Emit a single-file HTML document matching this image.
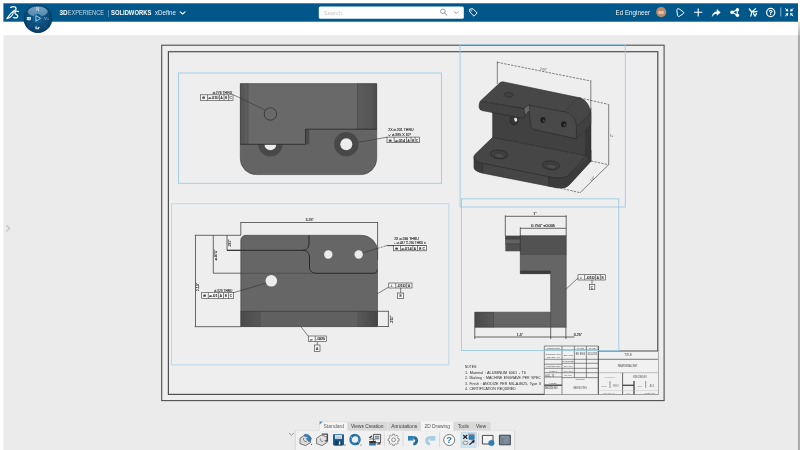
<!DOCTYPE html>
<html><head><meta charset="utf-8"><title>3DEXPERIENCE SOLIDWORKS xDefine</title>
<style>
html,body{margin:0;padding:0;width:800px;height:450px;overflow:hidden;background:#fff;font-family:"Liberation Sans",sans-serif;}
#app{position:absolute;left:0;top:0;width:800px;height:450px;background:#fff;overflow:hidden}
#canvas{position:absolute;left:4px;top:36px;width:793px;height:414px;background:#ebebeb}
#hdr{position:absolute;left:4px;top:4px;width:793px;height:17px;background:#01568a}
svg{position:absolute;left:0;top:0;filter:blur(0.45px)}
svg text{font-family:"Liberation Sans","DejaVu Sans",sans-serif}
#view1 text,#view3 text,#view4 text{fill:#262626;stroke:#262626;stroke-width:0.12px}
#notes text{fill:#2a2a2a}
</style></head><body>
<div id="app">
<div id="canvas"></div>
<div id="hdr"></div>
<svg id="main" width="800" height="450" viewBox="0 0 800 450">
<!--HEADER-ICONS-->
<defs><linearGradient id="gStrip" x1="0" x2="0" y1="0" y2="1"><stop offset="0" stop-color="#e6e6e6"/><stop offset="1" stop-color="#bdbdbd"/></linearGradient></defs>
<rect x="3.4" y="35.1" width="794.5" height="416" fill="#ebebeb"/>
<rect x="797.9" y="21.6" width="3" height="13.6" fill="url(#gStrip)"/>
<rect x="797.9" y="35.1" width="3" height="416" fill="#adadad"/>
<rect x="3.4" y="3.3" width="794.6" height="18.4" fill="#01568a"/>
<rect x="318.8" y="6.5" width="145" height="12.2" rx="1.5" fill="#ffffff"/>
<text x="323.8" y="14.6" font-size="5.6" fill="#c2c6ca" textLength="18.2" lengthAdjust="spacingAndGlyphs">Search</text>
<defs>
<radialGradient id="gComp" cx="0.5" cy="0.45" r="0.55"><stop offset="0" stop-color="#0e5a8c"/><stop offset="0.7" stop-color="#0a4b78"/><stop offset="1" stop-color="#063a5e"/></radialGradient>
<linearGradient id="gCompTop" x1="0" x2="0" y1="0" y2="1"><stop offset="0" stop-color="#7fa9c6"/><stop offset="1" stop-color="#5a8fb3"/></linearGradient>
</defs>
<g id="hdricons">
<!-- DS logo -->
<g fill="none" stroke="#fff" stroke-width="1.25" stroke-linecap="round" stroke-linejoin="round">
<path d="M10.6 7.5 C12 6.6 14 6.4 15.2 7 C16.6 7.8 16.2 9.4 15 10.2 C14.4 10.7 13.8 11 13 11.5"/>
<path d="M18.4 11.6 C17.4 10.8 15.6 10.9 15 11.9 C14.3 13.2 15.8 14.2 17 15 C18.2 15.9 17.8 17.3 16.4 17.8 C15.4 18.1 14.4 17.9 13.5 17.5"/>
</g>
<path d="M13.3 11.2 C11 13 8.6 16 6.7 18.7 C10.6 17.6 13.4 14.6 13.3 11.2 Z" fill="none" stroke="#fff" stroke-width="1.05" stroke-linejoin="round"/>
<!-- compass -->
<circle cx="37.9" cy="18.8" r="14.2" fill="url(#gComp)"/>
<circle cx="37.9" cy="18.8" r="13.8" fill="none" stroke="#073a5e" stroke-width="0.8" opacity="0.6"/>
<ellipse cx="37.7" cy="11.6" rx="10" ry="5.1" fill="url(#gCompTop)" opacity="0.9"/>
<path d="M31 25.5 L28.5 28 M44.6 25.5 L47.5 28.5" stroke="#2f78a6" stroke-width="0.6" fill="none" opacity="0.8"/>
<circle cx="37.6" cy="18.4" r="4.4" fill="#0d5a8e" stroke="#2a77a8" stroke-width="0.4"/>
<path d="M35.9 15.6 L40.6 18.4 L35.9 21.2 Z" fill="none" stroke="#cfe3f1" stroke-width="0.8" stroke-linejoin="round"/>
<text x="28.8" y="19.5" font-size="3.4" font-weight="bold" fill="#fff" stroke="#fff" stroke-width="0.25" text-anchor="middle">3D</text>
<text x="46.6" y="19.7" font-size="4.2" font-style="italic" fill="#a9c6da" text-anchor="middle">V+</text>
<text x="37.5" y="28.6" font-size="4.2" font-weight="bold" fill="#fff" stroke="#fff" stroke-width="0.25" text-anchor="middle">i.r</text>
<text x="37.6" y="11.2" font-size="4.6" fill="#e5eff6" text-anchor="middle">N</text>
<g id="hdrtext" fill="#fff" font-size="6.3">
<text x="59.4" y="14.7" font-weight="bold" textLength="8.2" lengthAdjust="spacingAndGlyphs">3D</text>
<text x="67.7" y="14.7" fill="#c9dbe8" textLength="36.3" lengthAdjust="spacingAndGlyphs">EXPERIENCE</text>
<text x="107.6" y="14.5" fill="#8fb3cc" font-size="7">|</text>
<text x="111" y="14.7" font-weight="bold" textLength="40.3" lengthAdjust="spacingAndGlyphs">SOLIDWORKS</text>
<text x="155" y="14.7" fill="#e8f0f6" textLength="21" lengthAdjust="spacingAndGlyphs">xDefine</text>
<text x="615.5" y="14.7" fill="#f0f5f9" font-size="6.5" textLength="34.5" lengthAdjust="spacingAndGlyphs">Ed Engineer</text>
</g>
<!-- chevron after xDefine -->
<path d="M180.2 11.9 L182.6 14 L185 11.9" fill="none" stroke="#fff" stroke-width="1.1" stroke-linecap="round" stroke-linejoin="round"/>
<!-- search icons -->
<circle cx="442.9" cy="11.3" r="2.3" fill="none" stroke="#6f7a84" stroke-width="0.7"/>
<path d="M444.6 13 L446.9 15.3" stroke="#6f7a84" stroke-width="0.9" stroke-linecap="round"/>
<path d="M454.2 11.5 L456.3 13.4 L458.4 11.5" fill="none" stroke="#7a858f" stroke-width="0.8"/>
<!-- tag icon -->
<path d="M469.8 9 L473 8.8 L477.2 13 L474 16.2 L469.8 12 Z" fill="none" stroke="#fff" stroke-width="0.95" stroke-linejoin="round"/>
<circle cx="471.7" cy="10.8" r="0.6" fill="#fff"/>
<!-- avatar -->
<circle cx="661.2" cy="12.1" r="5.1" fill="#b78b6b"/>
<text x="661.2" y="13.6" font-size="4.2" font-weight="bold" fill="#f3e6dc" text-anchor="middle">EE</text>
<!-- icons -->
<g fill="none" stroke="#fff" stroke-width="1" stroke-linecap="round" stroke-linejoin="round">
<path d="M676.8 10 C676.6 8.6 678.6 8.3 679.6 9.2 L683.6 12.2 C684.2 12.7 683.9 13.4 683.2 13.7 L679.3 16.3 C678.4 16.8 677.6 16.3 677.5 15.4 Z"/>
<path d="M698.2 8.7 V16 M694.5 12.3 H701.9" stroke-width="1.1"/>
<path d="M712.4 16 C712.6 13.4 714.4 11.8 717 11.8 V9.4 L720.3 12.4 L717 15.3 V13.4 C715 13.4 713.5 14.2 712.4 16 Z" fill="#fff" stroke-width="0.5"/>
<path d="M732.2 12.3 L737.2 9.8 M732.2 12.3 L737.2 15.2 M737.2 9.8 V15.2" stroke-width="1.05"/>
<path d="M749.3 9 L751.8 12 L750.8 16.2 M755.6 8.6 L751.8 12 M753 12.2 L757 11.4 M753.6 13.6 L755 16.2 L756.6 13.4" stroke-width="1.2"/>
<circle cx="770.7" cy="12.5" r="4.1" stroke-width="1.2"/>
</g>
<circle cx="732" cy="12.3" r="1.8" fill="#fff"/><circle cx="737.4" cy="9.7" r="1.7" fill="#fff"/><circle cx="737.4" cy="15.3" r="1.7" fill="#fff"/>
<text x="770.7" y="14.8" font-size="6.4" font-weight="bold" fill="#fff" stroke="#fff" stroke-width="0.2" text-anchor="middle">?</text>
<path d="M780.7 7.6 V16.6" stroke="#6a9dc0" stroke-width="1.3"/>
<g fill="#fff">
<path d="M788.3 11.5 L785.2 10.9 L787.7 8.4 Z M790.1 11.5 L793.2 10.9 L790.7 8.4 Z M788.3 13.1 L785.2 13.7 L787.7 16.2 Z M790.1 13.1 L793.2 13.7 L790.7 16.2 Z"/>
</g>
<g stroke="#fff" stroke-width="1" fill="none"><path d="M785.2 8.4 L787 10.2 M793.2 8.4 L791.4 10.2 M785.2 16.2 L787 14.4 M793.2 16.2 L791.4 14.4"/></g>
</g>
<!--SHEET-->
<g id="sheet" fill="none">
<rect x="161.7" y="45.2" width="502.4" height="355.4" fill="#eeeeee" stroke="#4e4e4e" stroke-width="1.1"/>
<rect x="168.4" y="51.7" width="489.4" height="342.7" stroke="#4e4e4e" stroke-width="1.2"/>
</g>
<path d="M6.3 225.2 L9.6 228.3 L6.3 231.4" fill="none" stroke="#c4c4c4" stroke-width="1.3"/>
<!--VIEW1-->
<defs>
<linearGradient id="gR1" x1="0" x2="1" y1="0" y2="0"><stop offset="0" stop-color="#5b5b5b"/><stop offset="0.7" stop-color="#555555"/><stop offset="1" stop-color="#4a4a4a"/></linearGradient>
<linearGradient id="gL1" x1="0" x2="1" y1="0" y2="0"><stop offset="0" stop-color="#525252"/><stop offset="1" stop-color="#606060"/></linearGradient>
<clipPath id="cpLow1"><rect x="240" y="144.3" width="140" height="40"/></clipPath>
</defs>
<g id="view1">
<path d="M240.3 83.7 H376.7 V158.6 A16 16 0 0 1 360.7 174.6 H256.3 A16 16 0 0 1 240.3 158.6 Z" fill="#646464"/>
<path d="M240.3 83.7 H376.7 V129.2 H305.5 V144.3 H240.3 Z" fill="#696969"/>
<rect x="240.3" y="83.7" width="7.6" height="60.6" fill="url(#gL1)"/>
<rect x="357.5" y="83.7" width="19.2" height="45.5" fill="url(#gR1)"/>
<rect x="305.5" y="129.2" width="3.3" height="15.1" fill="#4c4c4c"/>
<g clip-path="url(#cpLow1)">
<circle cx="270.4" cy="144.3" r="12.2" fill="#484848"/>
<circle cx="270.4" cy="144.3" r="5.9" fill="#ececec"/>
</g>
<circle cx="346.3" cy="144.2" r="12.2" fill="#484848"/>
<circle cx="346.3" cy="144.2" r="6" fill="#ececec"/>
<path d="M240.3 144.3 H305.5 V129.2 H376.7" fill="none" stroke="#2e2e2e" stroke-width="0.9"/>
<path d="M248 83.7 V144.3 M357.5 83.7 V129.2 M308.8 129.6 V144.3" fill="none" stroke="#3c3c3c" stroke-width="0.5"/>
<path d="M240.3 83.7 H376.7 V158.6 A16 16 0 0 1 360.7 174.6 H256.3 A16 16 0 0 1 240.3 158.6 Z" fill="none" stroke="#3a3a3a" stroke-width="0.6"/>
<circle cx="270.4" cy="114" r="6.2" fill="none" stroke="#2a2a2a" stroke-width="0.7"/>
<path d="M233 94.6 L265.4 110.2" stroke="#333" stroke-width="0.6" fill="none"/>
<path d="M358.3 142.3 L387 137.2" stroke="#333" stroke-width="0.6" fill="none"/>
<!-- left annotation -->
<text x="212.7" y="94" font-size="4.1" fill="#333" textLength="19.5" lengthAdjust="spacingAndGlyphs">⌀.276 THRU</text>
<g fill="#f4f4f4" stroke="#3a3a3a" stroke-width="0.6">
<rect x="200.3" y="94.8" width="32.7" height="5.6"/>
<path d="M207.5 94.8 V100.4 M219.5 94.8 V100.4 M224 94.8 V100.4 M228.5 94.8 V100.4" fill="none"/>
</g>
<text x="201.9" y="99.3" font-size="4" fill="#222">⊕</text>
<text x="208.5" y="99.2" font-size="3.2" fill="#333" textLength="10" lengthAdjust="spacingAndGlyphs">⌀.010</text>
<text x="220.5" y="99.2" font-size="3.2" fill="#333">A</text>
<text x="225" y="99.2" font-size="3.2" fill="#333">B</text>
<text x="229.5" y="99.2" font-size="3.2" fill="#333">C</text>
<!-- right annotation -->
<text x="388.2" y="131.4" font-size="4.1" fill="#333" textLength="25.4" lengthAdjust="spacingAndGlyphs">2X ⌀.201 THRU</text>
<text x="388.2" y="136.1" font-size="4.1" fill="#333" textLength="23" lengthAdjust="spacingAndGlyphs">⌵ ⌀.385 X 82°</text>
<g fill="#f4f4f4" stroke="#3a3a3a" stroke-width="0.6">
<rect x="387" y="137.1" width="32.4" height="5.6"/>
<path d="M394.2 137.1 V142.7 M406.5 137.1 V142.7 M411 137.1 V142.7 M415.2 137.1 V142.7" fill="none"/>
</g>
<text x="388.6" y="141.7" font-size="4" fill="#222">⊕</text>
<text x="395.2" y="141.5" font-size="3.2" fill="#333" textLength="10" lengthAdjust="spacingAndGlyphs">⌀.014</text>
<text x="407.5" y="141.5" font-size="3.2" fill="#333">A</text>
<text x="412" y="141.5" font-size="3.2" fill="#333">B</text>
<text x="416" y="141.5" font-size="3.2" fill="#333">C</text>
</g>
<!--VIEW2-->
<g id="view2" stroke-linejoin="round">
<!-- dimension lines -->
<g stroke="#333" stroke-width="0.6" fill="none">
<path d="M497.3 84 V61.5 M590.8 108 V80.4"/>
<path d="M497.3 62.3 L590.8 81" stroke-dasharray="2.4 1.1"/>
<path d="M583.5 98.7 L608.7 104.4" stroke-dasharray="2.4 1.1"/>
<path d="M608.7 104.4 V164.7"/>
<path d="M591 161 L608.7 164.7" stroke-dasharray="2.4 1.1"/>
<path d="M608.7 164.7 L580 192.7"/>
<path d="M556.7 187.3 L580 192.7" stroke-dasharray="2.4 1.1"/>
</g>
<text x="543.3" y="70.2" font-size="3.2" fill="#444" text-anchor="middle" transform="rotate(9.5 543.3 70.2)">3.25"</text>
<text transform="translate(612.6 135.6) rotate(-90)" font-size="3.2" fill="#444" text-anchor="middle">2"</text>
<text transform="translate(593.2 179.3) rotate(-45)" font-size="3.2" fill="#444" text-anchor="middle">1.5"</text>

<!-- base plate: side (front/left/right) -->
<path d="M474 156.6 V167.2 C474 169.9 477 171.5 482 173 L556.7 187.8 C562 188.6 566 187.9 568.9 185.2 L591 161.2 V150 L568 172 L483 162 Z" fill="#454545" stroke="#262626" stroke-width="0.6"/>
<path d="M474 156.6 V167.2 C474 169.9 477 171.5 482.7 173.1 V163.4 Z" fill="#3c3c3c"/>
<path d="M548.7 176.6 V186.3 L556.7 187.8 C562 188.6 566 187.9 568.9 185.2 L591 161.2 V155 L568 176 Z" fill="#3b3b3b"/>
<!-- base top face -->
<path d="M492.7 137.3 L474.9 154.6 C473.3 156.6 473.6 159.2 476.5 161 C478.6 162.2 480.5 162.8 482.7 163.3 L548.7 176.6 C556 178.2 563.5 178.8 568.7 175.3 L586 156.3 L585.4 155.4 Z" fill="#464646" stroke="#262626" stroke-width="0.6"/>
<path d="M482.7 163.3 V173.1 M548.7 176.6 V186.3" stroke="#2c2c2c" stroke-width="0.5" fill="none"/>
<!-- wall right side -->
<path d="M585.5 128 V155.4 L591 161.2 V108 Z" fill="#373737" stroke="#262626" stroke-width="0.5"/>
<!-- wall front face -->
<path d="M492.7 112 V137.3 L585.5 155.4 V129 L575 138 L535 128 L530 104 Z" fill="#414141" stroke="#262626" stroke-width="0.6"/>
<!-- hole in wall under lip -->
<ellipse cx="514" cy="120.4" rx="4" ry="4.3" fill="#373737" stroke="#1f1f1f" stroke-width="0.6"/>
<ellipse cx="515.7" cy="119.6" rx="1.5" ry="2.1" fill="#e8e8e8" transform="rotate(-20 515.7 119.6)"/>
<!-- curved right surface of block -->
<path d="M576.7 98.7 L580.7 98 C586 100.5 589.6 105 590.8 113.3 V124 L585.5 130 L576.3 138.8 V126.5 C576 119 571.5 113.6 564 111.6 Z" fill="#464646" stroke="#262626" stroke-width="0.6"/>
<path d="M576.5 126.6 L590.8 113.3 V124 L585.5 130 L576.3 138.8 Z" fill="#414141"/>
<path d="M576.5 126.6 L590.8 113.3" stroke="#2a2a2a" stroke-width="0.5" fill="none"/>
<!-- block front face -->
<path d="M528.7 105 L564 111.6 C571.5 113.6 576 119 576.5 126.6 L576.3 138.8 L536 130 C533 129.3 531.2 128 530.7 125.5 L529 110.5 Z" fill="#494949" stroke="#262626" stroke-width="0.6"/>
<ellipse cx="543" cy="120" rx="2.7" ry="3" fill="#1e1e1e"/>
<ellipse cx="563.7" cy="124.3" rx="2.7" ry="3" fill="#1e1e1e"/>
<ellipse cx="543.9" cy="120.7" rx="1" ry="1.2" fill="#474747"/>
<ellipse cx="564.6" cy="125" rx="1" ry="1.2" fill="#474747"/>
<!-- top face -->
<path d="M503.5 81.9 L580.7 98 L576.7 98.7 L564 111.6 L528.7 105 L524 108.7 L483 101.6 C481 101.4 480.2 101.6 479.6 102.6 L480.2 101.2 L498.7 84 C500 82.6 501.5 81.6 503.5 81.9 Z" fill="#474747" stroke="#262626" stroke-width="0.6"/>
<ellipse cx="508.7" cy="94.7" rx="4.3" ry="2.4" fill="#404040" stroke="#2a2a2a" stroke-width="0.5" transform="rotate(8 508.7 94.7)"/>
<!-- lip front face -->
<path d="M483 101.6 L524 108.7 L525.3 114.6 C525.5 117.3 523.8 118.3 521.3 118 L482.2 110.6 C480 110 479 108.3 479.1 105.8 C479.2 103.3 480 101.3 483 101.6 Z" fill="#434343" stroke="#262626" stroke-width="0.6"/>
<!-- notch face -->
<path d="M524 108.7 L528.9 104.8 L529.6 110.3 L525.2 115 Z" fill="#686868" stroke="#2c2c2c" stroke-width="0.4"/>
<!-- countersinks on base -->
<g fill="#3f3f3f" stroke="#242424" stroke-width="0.6">
<ellipse cx="499" cy="154.4" rx="8.7" ry="4.3" transform="rotate(6 499 154.4)"/>
<ellipse cx="551" cy="165.3" rx="8.7" ry="4.4" transform="rotate(6 551 165.3)"/>
</g>
<g fill="#4d4d4d" stroke="#2c2c2c" stroke-width="0.5">
<ellipse cx="499.3" cy="155.6" rx="5" ry="2.3" transform="rotate(6 499.3 155.6)"/>
<ellipse cx="551.3" cy="166.5" rx="5" ry="2.3" transform="rotate(6 551.3 166.5)"/>
</g>
</g>
<!--VIEW3-->
<defs>
<linearGradient id="gR3" x1="0" x2="1" y1="0" y2="0"><stop offset="0" stop-color="#5a5a5a"/><stop offset="1" stop-color="#444444"/></linearGradient>
<linearGradient id="gL3" x1="0" x2="1" y1="0" y2="0"><stop offset="0" stop-color="#4a4a4a"/><stop offset="1" stop-color="#575757"/></linearGradient>
</defs>
<g id="view3">
<!-- dimension lines -->
<g stroke="#3a3a3a" stroke-width="0.75" fill="none">
<path d="M240.8 235 V222 M377.6 260 V222 M240.8 222.5 H377.6"/>
<path d="M194.7 235.3 H241 M195.5 235.3 V326.7 M194.7 326.7 H241"/>
<path d="M213.3 235.3 V273.2 M213.3 273.2 H241"/>
<path d="M227 235.3 V250.3 M227 250.3 H241"/>
<path d="M377.5 311.3 H389 M377.5 326.5 H389 M388.4 311.3 V326.5"/>
</g>
<path d="M240.8 326.6 V240.3 A5 5 0 0 1 245.8 235.3 H361.5 A16 16 0 0 1 377.5 251.3 V326.6 Z" fill="#666666"/>
<rect x="240.8" y="311.3" width="136.7" height="15.3" fill="#606060"/>
<rect x="240.8" y="311.3" width="19.2" height="15.3" fill="url(#gL3)"/>
<rect x="358" y="311.3" width="19.5" height="15.3" fill="url(#gR3)"/>
<path d="M240.8 311.3 H377.5" stroke="#3d3d3d" stroke-width="0.8" fill="none"/>
<path d="M260 311.3 V326.6 M358 311.3 V326.6" stroke="#444" stroke-width="0.5" fill="none"/>
<path d="M240.8 273.3 H316" stroke="#4a4a4a" stroke-width="0.7" fill="none"/>
<path d="M227 250.3 H302.5 C307 250.3 309 247.5 309 243.5 V235.3 M302.5 250.3 C307 250.3 309.5 253 309.5 257.5 V266.8 C309.5 271 312 273.3 316.5 273.3 H373.5 C376 273.3 377.5 272 377.5 269.5" stroke="#242424" stroke-width="0.95" fill="none"/>
<path d="M240.8 326.6 V240.3 A5 5 0 0 1 245.8 235.3 H361.5 A16 16 0 0 1 377.5 251.3 V326.6 Z" fill="none" stroke="#3a3a3a" stroke-width="0.6"/>
<circle cx="271.3" cy="280.8" r="5.8" fill="#ececec"/>
<circle cx="328.3" cy="254.5" r="4.2" fill="#ececec"/>
<circle cx="358.7" cy="254.5" r="4.2" fill="#ececec"/>
<!-- leaders -->
<g stroke="#333" stroke-width="0.6" fill="none">
<path d="M233.7 292.6 L266 283.2"/>
<path d="M362.6 253 L377.5 248.4"/><path d="M377.5 248.4 L386.4 245.7" stroke-dasharray="2.2 1"/>
<path d="M386.4 245.6 H426.4" stroke-width="0.9"/>
<path d="M377.5 293.7 L388.8 287"/>
<path d="M300.7 326.4 L308.7 336.7"/>
<path d="M400.6 288 V293 M317.3 341.6 V345"/>
</g>
<!-- dim texts -->
<text x="309.7" y="221.2" font-size="3.6" fill="#333" text-anchor="middle">3.25"</text>
<text transform="translate(199.2 287) rotate(-90)" font-size="3.6" fill="#333" text-anchor="middle">2.13"</text>
<text transform="translate(217.3 255) rotate(-90)" font-size="3.6" fill="#333" text-anchor="middle">⌀.875"</text>
<text transform="translate(231 243.3) rotate(-90)" font-size="3.4" fill="#333" text-anchor="middle">.375"</text>
<text transform="translate(392.6 319.5) rotate(-90)" font-size="3.4" fill="#333" text-anchor="middle">.375"</text>
<!-- left annotation -->
<text x="214.2" y="291.5" font-size="4.1" fill="#333" textLength="18.3" lengthAdjust="spacingAndGlyphs">⌀.323 THRU</text>
<g fill="#f4f4f4" stroke="#3a3a3a" stroke-width="0.6">
<rect x="201.7" y="292.6" width="32" height="5.7"/>
<path d="M208.3 292.6 V298.3 M218.6 292.6 V298.3 M223.5 292.6 V298.3 M228.5 292.6 V298.3" fill="none"/>
</g>
<text x="203" y="297.3" font-size="4" fill="#222">⊕</text>
<text x="209.3" y="297" font-size="3.2" fill="#333" textLength="8.5" lengthAdjust="spacingAndGlyphs">⌀.01</text>
<text x="219.8" y="297" font-size="3.2" fill="#333">A</text>
<text x="224.8" y="297" font-size="3.2" fill="#333">B</text>
<text x="229.8" y="297" font-size="3.2" fill="#333">C</text>
<!-- top-right annotation -->
<text x="394.2" y="239.7" font-size="4" fill="#333" textLength="24.6" lengthAdjust="spacingAndGlyphs">2X ⌀.266 THRU</text>
<text x="394.2" y="244.4" font-size="4" fill="#333" textLength="31.6" lengthAdjust="spacingAndGlyphs">⌴ ⌀.437 ↧.250 THRU ●</text>
<g fill="#f4f4f4" stroke="#3a3a3a" stroke-width="0.6">
<rect x="393.5" y="245.6" width="32.9" height="5.2"/>
<path d="M400.5 245.6 V250.8 M412.8 245.6 V250.8 M417.5 245.6 V250.8" fill="none"/>
</g>
<text x="395" y="250" font-size="4" fill="#222">⊕</text>
<text x="401.6" y="249.6" font-size="3.2" fill="#333" textLength="10" lengthAdjust="spacingAndGlyphs">⌀.014</text>
<text x="413.8" y="249.6" font-size="3.2" fill="#333">A</text>
<text x="419" y="249.6" font-size="3.2" fill="#333" textLength="6" lengthAdjust="spacingAndGlyphs">B C</text>
<!-- right annotation -->
<g fill="#f4f4f4" stroke="#3a3a3a" stroke-width="0.6">
<rect x="388.8" y="283" width="23.2" height="5"/>
<path d="M395.7 283 V288 M406.7 283 V288" fill="none"/>
<rect x="397.5" y="293" width="6.2" height="5.3"/>
</g>
<text x="390.3" y="287" font-size="3.4" fill="#222">⊥</text>
<text x="396.7" y="287" font-size="3.2" fill="#333" textLength="9" lengthAdjust="spacingAndGlyphs">.010</text>
<text x="408" y="287" font-size="3.2" fill="#333">A</text>
<text x="399.5" y="297.1" font-size="3.2" fill="#333">B</text>
<!-- bottom annotation -->
<g fill="#f4f4f4" stroke="#3a3a3a" stroke-width="0.6">
<rect x="308.4" y="336" width="18.3" height="5.6"/>
<path d="M315.3 336 V341.6" fill="none"/>
<rect x="314.4" y="345" width="5.6" height="6.3"/>
</g>
<text x="309.7" y="340.6" font-size="3.6" fill="#222">▱</text>
<text x="316.2" y="340.4" font-size="3.2" fill="#333" textLength="9" lengthAdjust="spacingAndGlyphs">.005</text>
<text x="316" y="349.6" font-size="3.4" fill="#333">A</text>
</g>
<!--VIEW4-->
<defs>
<linearGradient id="gL4" x1="0" x2="1" y1="0" y2="0"><stop offset="0" stop-color="#484848"/><stop offset="1" stop-color="#5a5a5a"/></linearGradient>
</defs>
<g id="view4">
<g stroke="#3a3a3a" stroke-width="0.75" fill="none">
<path d="M505.3 236 V215.3 M566.2 236 V215.3 M505.3 216.3 H566.2"/>
<path d="M520.3 236 V227.3 M520.3 228.3 H566.2"/>
<path d="M474.8 327 V339 M550.7 327 V339 M565.9 327 V339 M474.8 337 H574.5"/>
</g>
<!-- small left block -->
<rect x="505.3" y="235.8" width="15.2" height="15.5" fill="#505050"/>
<rect x="505.3" y="235.8" width="15.2" height="3.8" fill="#464646"/>
<rect x="505.3" y="239.6" width="15.2" height="4" fill="#626262"/>
<path d="M505.3 244 H520.3" stroke="#3a3a3a" stroke-width="0.6"/>
<!-- main body -->
<path d="M520.3 235.8 H566.2 V327.2 H474.8 V312.2 H550.7 V273.7 H520.3 Z" fill="#656565"/>
<rect x="520.3" y="235.8" width="45.9" height="19.2" fill="#525252"/>
<rect x="520.3" y="270.6" width="30.4" height="3.1" fill="#3c3c3c"/>
<rect x="474.8" y="312.2" width="18.7" height="15" fill="url(#gL4)"/>
<path d="M493.5 312.2 V327.2 M550.7 312.2 V327.2" stroke="#3c3c3c" stroke-width="0.5" fill="none"/>
<path d="M520.3 235.8 H566.2 V327.2 H474.8 V312.2 H550.7 V273.7 H520.3 Z" fill="none" stroke="#3a3a3a" stroke-width="0.6"/>
<path d="M520.3 235.8 V251.3" stroke="#333" stroke-width="0.6"/>
<!-- texts -->
<text x="535" y="214.6" font-size="3.6" fill="#333" text-anchor="middle">1"</text>
<text x="531.3" y="227.2" font-size="3.4" fill="#333" textLength="23.7" lengthAdjust="spacingAndGlyphs">0.750" ±0.005</text>
<text x="520" y="336.3" font-size="3.6" fill="#333" text-anchor="middle">1.5"</text>
<text x="578" y="336.3" font-size="3.6" fill="#333" text-anchor="middle">0.25"</text>
<!-- annotation -->
<path d="M565.9 289.3 L578 278 M592 280 V284.4" stroke="#333" stroke-width="0.6" fill="none"/>
<g fill="#f4f4f4" stroke="#3a3a3a" stroke-width="0.6">
<rect x="578" y="274.7" width="27.3" height="5.3"/>
<path d="M584.6 274.7 V280 M595.6 274.7 V280 M600.4 274.7 V280" fill="none"/>
<rect x="589.3" y="284.4" width="5.5" height="5.3"/>
</g>
<text x="579.6" y="279" font-size="3.4" fill="#222">⊥</text>
<text x="585.7" y="278.9" font-size="3.2" fill="#333" textLength="9" lengthAdjust="spacingAndGlyphs">.010</text>
<text x="596.8" y="278.9" font-size="3.2" fill="#333">A</text>
<text x="601.6" y="278.9" font-size="3.2" fill="#333">B</text>
<text x="590.8" y="288.6" font-size="3.2" fill="#333">C</text>
</g>
<!--TITLEBLOCK-->
<g id="notes" font-size="4.1" fill="#3a3a3a" word-spacing="0.6">
<text x="465" y="367.7" textLength="12" lengthAdjust="spacingAndGlyphs">NOTES:</text>
<text x="465" y="373.7" textLength="60.8" lengthAdjust="spacingAndGlyphs">1. Material : ALUMINUM 6061 - T6</text>
<text x="465" y="379.3" textLength="75.8" lengthAdjust="spacingAndGlyphs">2. Marking : MACHINE ENGRAVE PER SPEC</text>
<text x="465" y="384.6" textLength="75.8" lengthAdjust="spacingAndGlyphs">3. Finish : ANODIZE PER MIL-A-8625, Type II</text>
<text x="465" y="390" textLength="50.7" lengthAdjust="spacingAndGlyphs">4. CERTIFICATION REQUIRED</text>
</g>
<g id="titleblock">
<path d="M544.3 346 H598.3 V351 H658 V394.4 H544.3 Z" fill="#f1f1f1"/>
<g fill="none" stroke="#444" stroke-width="0.6">
<path d="M544.3 346 H598.3 M544.3 346 V394.4 M562 346 V394.4 M574.4 346 V377.6 M586.4 346 V377.6"/>
<path d="M598.3 346 V394.4" stroke-width="1"/>
<path d="M544.3 350 H598.3 M544.3 359.3 H598.3 M562 363.3 H598.3 M544.3 368.3 H598.3 M544.3 372.7 H598.3 M562 377.6 H598.3 M544.3 377 H562" stroke-width="0.6"/>
<path d="M544.3 364.2 H562" stroke-width="0.6"/>
<path d="M544.3 385.2 H562" stroke-width="1.4"/>
<path d="M598.3 351 H658" stroke-width="1.1" stroke="#4a4a4a"/>
<path d="M598.3 359.3 H658" stroke-width="0.7"/>
<path d="M598.3 372.7 H658" stroke-width="0.5" stroke="#8a8a8a"/>
<path d="M622.6 372.7 V394.4" stroke-width="0.8"/>
<path d="M634 381 V394.4" stroke-width="1.3"/>
<path d="M622.6 385.3 H634" stroke-width="1.3"/>
<path d="M610 381 V388 M645.7 381 V388" stroke-width="0.6" stroke="#555"/>
<path d="M598.3 390.5 H658" stroke-width="0.4" stroke="#bdbdbd"/>
</g>
<g fill="#444" font-size="2.4">
<text x="553.2" y="348.7" text-anchor="middle" textLength="13" lengthAdjust="spacingAndGlyphs">UNLESS OTHERWISE</text>
<text x="580.4" y="348.9" text-anchor="middle">NAME</text>
<text x="592.4" y="348.9" text-anchor="middle">DATE</text>
<text x="553.2" y="354.6" text-anchor="middle" textLength="15" lengthAdjust="spacingAndGlyphs">DIMENSIONS ARE IN</text>
<text x="553.2" y="358" text-anchor="middle" textLength="13" lengthAdjust="spacingAndGlyphs">INCHES ±.01</text>
<text x="568.2" y="355.6" text-anchor="middle">DRAWN</text>
<text x="580.4" y="354.9" text-anchor="middle" font-size="3" textLength="9.5" lengthAdjust="spacingAndGlyphs">ED ENG</text>
<text x="592.4" y="354.9" text-anchor="middle" font-size="3" textLength="9.5" lengthAdjust="spacingAndGlyphs">01/02/20</text>
<text x="568.2" y="362.2" text-anchor="middle">CHECKED</text>
<text x="553.2" y="367.2" text-anchor="middle" textLength="14" lengthAdjust="spacingAndGlyphs">INTERPRET GEOM</text>
<text x="568.2" y="367" text-anchor="middle" textLength="9" lengthAdjust="spacingAndGlyphs">ENG APPR</text>
<text x="553.2" y="371.5" text-anchor="middle" textLength="8" lengthAdjust="spacingAndGlyphs">MATERIAL</text>
<text x="568.2" y="371.5" text-anchor="middle" textLength="9" lengthAdjust="spacingAndGlyphs">MFG APPR</text>
<text x="545.3" y="376.6" font-size="3" textLength="9" lengthAdjust="spacingAndGlyphs">6061 - T6</text>
<text x="568.2" y="376.3" text-anchor="middle" textLength="8" lengthAdjust="spacingAndGlyphs">QUALITY</text>
<text x="580" y="380.3" text-anchor="middle" textLength="9" lengthAdjust="spacingAndGlyphs">COMMENTS</text>
<text x="553.2" y="383.5" text-anchor="middle">FINISH</text>
<text x="545.3" y="389.3" font-size="3.1" fill="#222" textLength="12.5" lengthAdjust="spacingAndGlyphs">ANODIZE, BLK</text>
<text x="580" y="388.7" text-anchor="middle" font-size="3.3" textLength="13.5" lengthAdjust="spacingAndGlyphs">SEE NOTES</text>
<text x="628" y="356.2" text-anchor="middle" font-size="2.8">TITLE</text>
<text x="627.7" y="367.2" text-anchor="middle" font-size="3.4" textLength="20" lengthAdjust="spacingAndGlyphs">REAR BRACKET</text>
<text x="610" y="378" text-anchor="middle" fill="#999">PROJECT</text>
<text x="640" y="378" text-anchor="middle" font-size="3.2" textLength="14" lengthAdjust="spacingAndGlyphs">SIZE  DWG NO</text>
<text x="604" y="387" text-anchor="middle" fill="#888">SIZE</text>
<text x="616" y="387" text-anchor="middle" fill="#777" font-size="2.8">REV</text>
<text x="640" y="387" text-anchor="middle" fill="#888">REV</text>
<text x="652" y="387" text-anchor="middle" fill="#777" font-size="2.8">A01</text>
<text x="609" y="393.5" text-anchor="middle" fill="#888">SCALE 1:1</text>
<text x="628" y="393.5" text-anchor="middle" fill="#888">WT</text>
<text x="650" y="393.5" text-anchor="middle" fill="#666" textLength="11" lengthAdjust="spacingAndGlyphs">SHEET 1 OF 1</text>
</g>
</g>
<g id="viewboxes" fill="none" stroke="#9ccbe0" stroke-width="0.9">
<rect x="178.5" y="73" width="263" height="110.3"/>
<rect x="460.1" y="44.7" width="165.2" height="162.3"/>
<rect x="171.5" y="203.8" width="277.4" height="161.1" stroke="#b5d8e8"/>
<rect x="461.5" y="198.8" width="157.3" height="151.7"/>
</g>
<!--TOOLBAR-->
<g id="toolbar">
<rect x="295.3" y="430.6" width="219.4" height="20" fill="#f1f1f1"/>
<path d="M295.3 430.6 V450 M514.7 430.6 V450" stroke="#d2d2d2" stroke-width="0.8" fill="none"/>
<path d="M295.3 430.6 H514.7" stroke="#dcdcdc" stroke-width="0.6" fill="none"/>
<!-- tabs -->
<rect x="319.5" y="421.6" width="27.6" height="9.2" fill="#f4f4f4"/>
<path d="M319.5 430.8 V421.6 H347.1" fill="none" stroke="#d6d6d6" stroke-width="0.5"/>
<path d="M319.6 421.6 H322.6 L319.6 424.8 Z" fill="#3d8fc9"/>
<rect x="347.3" y="421.8" width="40" height="8.6" fill="#d9d9d9"/>
<rect x="387.9" y="421.8" width="32.8" height="8.6" fill="#d9d9d9"/>
<rect x="421" y="421.6" width="32.2" height="9.2" fill="#f4f4f4"/>
<rect x="453.4" y="421.8" width="37.2" height="8.6" fill="#d9d9d9"/>
<g font-size="5.6" fill="#3c3c3c">
<text x="323.5" y="428" textLength="20.5" lengthAdjust="spacingAndGlyphs" fill="#666">Standard</text>
<text x="351" y="428" textLength="32.5" lengthAdjust="spacingAndGlyphs">Views Creation</text>
<text x="391.3" y="428" textLength="26" lengthAdjust="spacingAndGlyphs">Annotations</text>
<text x="424.5" y="428" textLength="25.5" lengthAdjust="spacingAndGlyphs" fill="#555">2D Drawing</text>
<text x="458" y="428" textLength="10.8" lengthAdjust="spacingAndGlyphs">Tools</text>
<text x="476" y="428" textLength="10" lengthAdjust="spacingAndGlyphs">View</text>
</g>
<path d="M289 433 L291.5 435.3 L294 433" fill="none" stroke="#777" stroke-width="0.7"/>
<!-- separators -->
<path d="M384.3 432.6 V446.4 M403 432.6 V446.4 M439.6 432.6 V446.4 M478.6 432.6 V446.4" stroke="#cfcfcf" stroke-width="0.7"/>
<!-- icon 1: part with blue arrow -->
<g stroke-linejoin="round">
<path d="M300 438.2 L305 435 L310.6 437 V442.4 L305.6 445.6 L300 443.6 Z" fill="#dcdcdc" stroke="#555" stroke-width="0.8"/>
<path d="M303.6 438 C303 440.2 304.4 441.8 306.6 441.6" fill="none" stroke="#555" stroke-width="0.7"/>
<path d="M304.6 434.4 C308 433.6 310.2 435.6 310.2 438.4 L311.8 438.4 L309 442 L306 438.4 L307.8 438.4 C307.8 437 306.6 436.2 304.6 436.6 Z" fill="#2f7fb8" stroke="#1f5f90" stroke-width="0.4"/>
<path d="M310.6 445 l1.4 0 l0 -1.4 z" fill="#444"/>
<!-- icon 2 -->
<path d="M316.6 438.2 L321.4 435 L327 437 V442.4 L322 445.6 L316.6 443.6 Z" fill="#e2e2e2" stroke="#5a5a5a" stroke-width="0.8"/>
<path d="M321.8 434.2 H327.4 V440.8 H324.6" fill="none" stroke="#4a4a4a" stroke-width="1.3"/>
<path d="M320.4 438.4 C320 440.4 321.2 441.8 323 441.6" fill="none" stroke="#5a5a5a" stroke-width="0.7"/>
<!-- icon 3: save -->
<rect x="333" y="434.2" width="11" height="11.2" rx="0.8" fill="#1d5f92"/>
<rect x="335" y="435" width="7" height="3.8" fill="#dfe9f1"/>
<path d="M335.6 436.2 H341.4 M335.6 437.5 H341.4" stroke="#7fa6c4" stroke-width="0.4"/>
<rect x="334.8" y="440.6" width="7.4" height="4.8" fill="#123f63"/>
<rect x="338.8" y="441.4" width="1.6" height="3.2" fill="#cfe0ee"/>
<path d="M344 445.4 l1.4 0 l0 -1.4 z" fill="#444"/>
<!-- icon 4: refresh -->
<circle cx="355" cy="439.6" r="4.5" fill="#e9eef2" stroke="#2a78b0" stroke-width="2.5"/>
<path d="M351 436.4 L354.4 436.2 L352.4 439 Z M359 442.8 L355.6 443 L357.6 440.2 Z" fill="#e9eef2"/>
<path d="M350.6 435 L354.8 434.6 L352.6 438 Z" fill="#1f5f90"/>
<path d="M359.4 444.2 L355.2 444.6 L357.4 441.2 Z" fill="#1f5f90"/>
<path d="M360 445.6 l1.4 0 l0 -1.4 z" fill="#444"/>
<!-- icon 5 -->
<rect x="373.4" y="434.4" width="7.2" height="8.4" fill="#f2f2f2" stroke="#444" stroke-width="0.9"/>
<rect x="374.8" y="435.8" width="4.4" height="3.6" fill="#7b8894"/>
<path d="M374.8 437.4 H379.2" stroke="#dfe4e8" stroke-width="0.5"/>
<path d="M368.8 437.6 L371.6 435.2 L372.2 436.4 L370.2 438.6 Z" fill="#3a3a3a"/>
<path d="M369.4 439.6 C371 438.4 373.4 438.8 375.4 440.2" fill="none" stroke="#555" stroke-width="0.8"/>
<rect x="369.2" y="441" width="6.6" height="2" fill="#333"/>
<rect x="369.2" y="443" width="6.6" height="2.5" fill="#2b77ad"/>
<path d="M376.6 444.6 L380.4 441.4 L380.4 444.6 Z" fill="#4a4a4a"/>
<!-- icon 6: gear -->
<path d="M397.96 438.68 L399.23 438.91 L399.23 440.69 L397.96 440.92 L397.47 442.09 L398.21 443.15 L396.95 444.41 L395.89 443.67 L394.72 444.16 L394.49 445.43 L392.71 445.43 L392.48 444.16 L391.31 443.67 L390.25 444.41 L388.99 443.15 L389.73 442.09 L389.24 440.92 L387.97 440.69 L387.97 438.91 L389.24 438.68 L389.73 437.51 L388.99 436.45 L390.25 435.19 L391.31 435.93 L392.48 435.44 L392.71 434.17 L394.49 434.17 L394.72 435.44 L395.89 435.93 L396.95 435.19 L398.21 436.45 L397.47 437.51 Z" fill="#f3f3f3" stroke="#666" stroke-width="0.65" stroke-linejoin="round"/>
<circle cx="393.6" cy="439.8" r="1.9" fill="#f3f3f3" stroke="#666" stroke-width="0.65"/>
<!-- icon 7: undo -->
<path d="M413.6 437.5 A3.15 3.15 0 0 1 413.3 443.9" fill="none" stroke="#2a6a96" stroke-width="2.9"/>
<rect x="408" y="436" width="5.6" height="4.6" fill="#3b8fc6"/>
<path d="M408 436 H413.6 V437.6 L408 440.6 Z" fill="#2f7db4"/>
<!-- icon 8: redo -->
<path d="M429.8 437.5 A3.15 3.15 0 0 0 430.1 443.9" fill="none" stroke="#a6c9dc" stroke-width="2.9"/>
<rect x="429.8" y="436" width="5.6" height="4.6" fill="#a9cfe3"/>
<!-- icon 9: help -->
<circle cx="449.2" cy="440" r="5.5" fill="#fbfbfb" stroke="#5a5a5a" stroke-width="0.8"/>
<text x="449.2" y="443.4" font-size="9.4" font-weight="bold" fill="#2a78b0" text-anchor="middle">?</text>
<!-- icon 10: active -->
<rect x="461" y="432.4" width="15.2" height="14.8" fill="#d6e7f3" stroke="#a9cde6" stroke-width="0.6"/>
<path d="M463.2 435 L467.2 438.8 M467.2 435 L463.2 438.8" stroke="#2a2a2a" stroke-width="1.3" fill="none"/>
<path d="M468 434.2 H474.6" stroke="#444" stroke-width="0.7"/>
<rect x="469" y="435.4" width="5.2" height="4" fill="#2f7fb8" stroke="#1f5f90" stroke-width="0.6"/>
<ellipse cx="465.4" cy="442.8" rx="2.6" ry="1.7" fill="#e6e6e6" stroke="#555" stroke-width="0.6"/>
<path d="M469.4 444.8 L473.8 441" stroke="#2a2a2a" stroke-width="1.2"/>
<path d="M474.8 440 L471.2 440.8 L474 443.6 Z" fill="#2a2a2a"/>
<!-- icon 11 -->
<rect x="482.4" y="435.4" width="10.6" height="8.6" fill="#f4f4f4" stroke="#4a4a4a" stroke-width="1"/>
<circle cx="491.4" cy="443" r="2.8" fill="#2f7fb8" stroke="#1f5f90" stroke-width="0.4"/>
<!-- icon 12 -->
<rect x="499.4" y="435.2" width="11" height="9.6" fill="#76838f" stroke="#2f3e4c" stroke-width="0.9"/>
<rect x="499.9" y="435.7" width="10" height="2.4" fill="#4a5967"/>
<rect x="500.4" y="436.2" width="9" height="1.6" fill="#8ba0b4"/>
<path d="M505 439 H509.6 M505 441 H509.6 M505 439 V444" stroke="#98a8b6" stroke-width="0.5" fill="none"/>
</g>
</g>
</svg>
</div>
</body></html>
